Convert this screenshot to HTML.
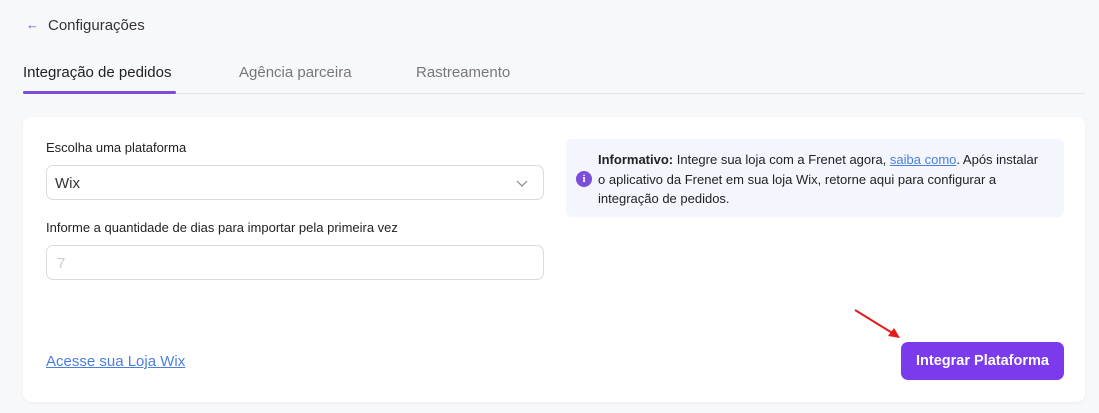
<!DOCTYPE html>
<html><head><meta charset="utf-8"><style>
*{box-sizing:border-box;margin:0;padding:0}
body{width:1099px;height:413px;background:#f7f8fa;font-family:"Liberation Sans",sans-serif;position:relative;overflow:hidden;color:#222}
.abs{position:absolute;white-space:nowrap}
.card{position:absolute;left:23px;top:117px;width:1062px;height:285px;background:#fff;border-radius:8px;box-shadow:0 1px 3px rgba(0,0,0,.05)}
.lbl{font-size:13px;color:#222}
.field{position:absolute;left:46px;width:498px;height:35px;border:1px solid #d9dbe0;border-radius:7px;background:#fff}
</style></head><body>
<div class="abs" style="left:26px;top:17px;color:#7c4ddb;font-size:13px">&larr;</div>
<div class="abs" style="left:48px;top:17px;font-size:15px;color:#333">Configurações</div>
<div class="abs" style="left:23px;top:64px;font-size:15px;color:#222">Integração de pedidos</div>
<div class="abs" style="left:239px;top:64px;font-size:15px;color:#777">Agência parceira</div>
<div class="abs" style="left:416px;top:64px;font-size:15px;color:#777">Rastreamento</div>
<div class="abs" style="left:23px;top:93px;width:1062px;height:1px;background:#e4e6ea"></div>
<div class="abs" style="left:23px;top:91px;width:153px;height:3px;background:#7c4ddb;border-radius:2px"></div>
<div class="card"></div>
<div class="abs lbl" style="left:46px;top:140px">Escolha uma plataforma</div>
<div class="field" style="top:165px"></div>
<div class="abs" style="left:55px;top:175px;font-size:15px;color:#333">Wix</div>
<svg class="abs" style="left:515px;top:178px" width="14" height="10" viewBox="0 0 14 10"><path d="M2 3l5 5 5-5" fill="none" stroke="#888" stroke-width="1.2"/></svg>
<div class="abs lbl" style="left:46px;top:220px">Informe a quantidade de dias para importar pela primeira vez</div>
<div class="field" style="top:245px"></div>
<div class="abs" style="left:57px;top:255px;font-size:15px;color:#ccc">7</div>
<div class="abs" style="left:46px;top:353px;font-size:15px;color:#4a7fe0;text-decoration:underline">Acesse sua Loja Wix</div>
<div class="abs" style="left:566px;top:139px;width:498px;height:78px;background:#f3f6fd;border-radius:6px"></div>
<div class="abs" style="left:576px;top:171px;width:16px;height:16px;border-radius:50%;background:#7c4ddb;color:#fff;font-size:11px;font-weight:bold;text-align:center;line-height:16px;font-family:'Liberation Serif',serif">i</div>
<div class="abs" style="left:598px;top:150px;font-size:13px;line-height:19.5px;color:#222"><b>Informativo:</b> Integre sua loja com a Frenet agora, <span style="color:#4a7fe0;text-decoration:underline">saiba como</span>. Após instalar<br>o aplicativo da Frenet em sua loja Wix, retorne aqui para configurar a<br>integração de pedidos.</div>
<div class="abs" style="left:901px;top:342px;width:163px;height:38px;background:#7c3aed;border-radius:7px;color:#fff;font-size:14.5px;font-weight:bold;text-align:center;line-height:38px">Integrar Plataforma</div>
<svg class="abs" style="left:850px;top:305px" width="55" height="40" viewBox="0 0 55 40"><line x1="5" y1="5" x2="44" y2="29" stroke="#e31b1b" stroke-width="2"/><path d="M50 33 L38 31 L44 23 Z" fill="#e31b1b"/></svg>
</body></html>
